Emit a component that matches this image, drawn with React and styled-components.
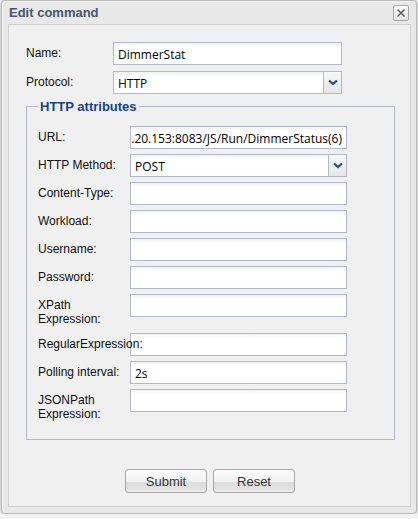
import React from "react";
import styled, { createGlobalStyle } from "styled-components";

const GlobalStyle = createGlobalStyle`
  html, body {
    margin: 0;
    padding: 0;
    background: #f3f3f3;
  }
  body {
    font-family: "Liberation Sans", Arial, sans-serif;
    font-size: 12px;
  }
`;

const Window = styled.div`
  box-sizing: border-box;
  width: 416px;
  height: 514px;
  margin: 0 1px;
  padding: 0 5px 6px 6px;
  background: #e8e8e8;
  border: 1px solid #b9b9b9;
  border-radius: 4px;
  box-shadow: inset 1px 1px 0 #f6f6f6, 0 0 0 1px #d8d8d8;
  display: flex;
  flex-direction: column;
`;

const TitleBar = styled.div`
  height: 23px;
  display: flex;
  align-items: center;
  justify-content: space-between;
  padding: 0 2px 0 1px;
`;

const Title = styled.span`
  font: bold 13px "Liberation Sans", Arial, sans-serif;
  color: #4a5568;
`;

const CloseButton = styled.button`
  box-sizing: border-box;
  width: 16px;
  height: 16px;
  padding: 0;
  border: 1px solid #a8a8a8;
  border-radius: 2px;
  background: linear-gradient(#fdfdfd, #e4e4e4);
  display: flex;
  align-items: center;
  justify-content: center;
  margin-top: 1px;
`;

const Panel = styled.div`
  flex: 1;
  background: #f0f0f0;
  border: 1px solid #cfcfcf;
  padding: 17px 17px 13px 17px;
  display: flex;
  flex-direction: column;
`;

const FormGrid = styled.div`
  display: grid;
  grid-template-columns: ${(p) => p.labelWidth}px ${(p) => p.fieldWidth}px;
  row-gap: ${(p) => p.gap}px;
  align-items: start;
`;

const Label = styled.label`
  position: relative;
  z-index: 1;
  padding: 4px 6px 2px 0;
  line-height: 14px;
  color: #111;
  white-space: ${(p) => (p.nowrap ? "nowrap" : "normal")};
`;

const TextBox = styled.div`
  box-sizing: border-box;
  height: 23px;
  border: 1px solid #b5b8c8;
  background: linear-gradient(#f0f0f0 0, #ffffff 4px);
  padding: 1px 4px 0 4px;
  display: flex;
  align-items: center;
  justify-content: ${(p) => (p.scrolled ? "flex-end" : "flex-start")};
  overflow: hidden;
  white-space: nowrap;
  font: 12px "Open Sans", "Liberation Sans", sans-serif;
  color: #000;
`;

const SelectBox = styled.div`
  box-sizing: border-box;
  height: 23px;
  display: flex;
`;

const SelectValue = styled(TextBox)`
  flex: 1;
  border-right: none;
`;

const Trigger = styled.div`
  box-sizing: border-box;
  width: 19px;
  height: 23px;
  border: 1px solid #b5b8c8;
  background: linear-gradient(#f8f8f8, #e6e6e6);
  display: flex;
  align-items: center;
  justify-content: center;
`;

const Fieldset = styled.fieldset`
  box-sizing: border-box;
  width: 369px;
  margin: 5px 0 0 0;
  padding: 12px 11px 16px 11px;
  border: 1px solid #b5b8c8;
`;

const Legend = styled.legend`
  padding: 0 2px;
  font: bold 13px "Liberation Sans", Arial, sans-serif;
  color: #15428b;
`;

const ButtonBar = styled.div`
  display: flex;
  justify-content: center;
  gap: 6px;
  margin-top: auto;
  padding-left: 1px;
`;

const Button = styled.button`
  box-sizing: border-box;
  width: 82px;
  height: 24px;
  border: 1px solid #a9a9a9;
  border-radius: 3px;
  background: linear-gradient(
    #fbfbfb 0,
    #f2f2f2 55%,
    #dcdcdc 56%,
    #e2e2e2 85%,
    #ececec 100%
  );
  font: 13px "Liberation Sans", Arial, sans-serif;
  color: #333;
  padding: 0;
`;

function Chevron() {
  return (
    <svg width="10" height="7" viewBox="0 0 10 7">
      <path d="M1 1.5 L5 5 L9 1.5" fill="none" stroke="#2b4c86" strokeWidth="2.2" />
    </svg>
  );
}

function CloseIcon() {
  return (
    <svg width="10" height="10" viewBox="0 0 10 10">
      <path d="M1.5 1.5 L8.5 8.5 M8.5 1.5 L1.5 8.5" stroke="#555" strokeWidth="1.4" />
    </svg>
  );
}

function Select({ value }) {
  return (
    <SelectBox>
      <SelectValue>{value}</SelectValue>
      <Trigger>
        <Chevron />
      </Trigger>
    </SelectBox>
  );
}

const httpFields = [
  { label: "Content-Type:" },
  { label: "Workload:" },
  { label: "Username:" },
  { label: "Password:" },
  { label: "XPath Expression:" },
  { label: "RegularExpression:", nowrap: true },
  { label: "Polling interval:", value: "2s" },
  { label: "JSONPath Expression:" },
];

export default function App() {
  return (
    <>
      <GlobalStyle />
      <Window>
        <TitleBar>
          <Title>Edit command</Title>
          <CloseButton>
            <CloseIcon />
          </CloseButton>
        </TitleBar>
        <Panel>
          <FormGrid labelWidth={87} fieldWidth={229} gap={6}>
            <Label>Name:</Label>
            <TextBox>DimmerStat</TextBox>
            <Label>Protocol:</Label>
            <Select value="HTTP" />
          </FormGrid>
          <Fieldset>
            <Legend>HTTP attributes</Legend>
            <FormGrid labelWidth={92} fieldWidth={217} gap={5}>
              <Label>URL:</Label>
              <TextBox scrolled>http://192.168.20.153:8083/JS/Run/DimmerStatus(6)</TextBox>
              <Label nowrap>HTTP Method:</Label>
              <Select value="POST" />
              {httpFields.map((f) => (
                <React.Fragment key={f.label}>
                  <Label nowrap={f.nowrap}>{f.label}</Label>
                  <TextBox>{f.value}</TextBox>
                </React.Fragment>
              ))}
            </FormGrid>
          </Fieldset>
          <ButtonBar>
            <Button>Submit</Button>
            <Button>Reset</Button>
          </ButtonBar>
        </Panel>
      </Window>
    </>
  );
}
